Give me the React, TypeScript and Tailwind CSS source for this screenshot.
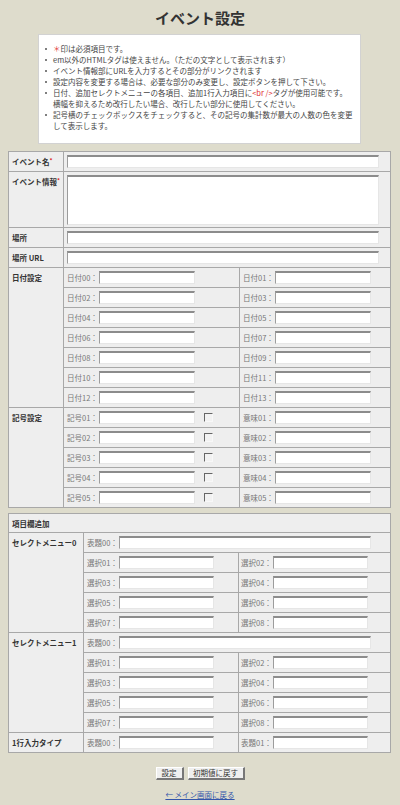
import React from 'react';

const inputCls =
  'h-[13px] bg-white border-t-2 border-l border-r border-b border-t-[#8c8c8c] border-l-[#9c9c9c] border-r-[#e6e6e6] border-b-[#e6e6e6] outline-none';

function Field({ className }: { className: string }) {
  return <input type="text" className={`${inputCls} ${className}`} />;
}

function Req() {
  return <span className="relative top-[-2px] text-[6px] text-[#dd2222]">*</span>;
}

function Tag({ children }: { children: React.ReactNode }) {
  return <span className="w-[32px] shrink-0 whitespace-nowrap text-[7.5px] leading-[11px] text-[#777]">{children}</span>;
}

function Check() {
  return (
    <span className="ml-[9px] h-[9px] w-[9px] border-t border-l border-r border-b border-t-[#666] border-l-[#666] border-r-[#f8f8f8] border-b-[#f8f8f8] bg-[#f2f2f2]" />
  );
}

function Group({ label, labelW, children }: { label: React.ReactNode; labelW: string; children: React.ReactNode }) {
  return (
    <div className="flex">
      <div
        className={`${labelW} shrink-0 whitespace-nowrap border-r border-b border-[#a8a8a8] pl-[3px] pt-[4px] text-[7.5px] font-bold leading-[11px] text-[#333]`}
      >
        {label}
      </div>
      <div className="min-w-0 flex-1">{children}</div>
    </div>
  );
}

interface PairProps {
  left: string;
  right: string;
  leftW: string;
  rightPad: string;
  fieldW: string;
  check?: boolean;
}

function Pair({ left, right, leftW, rightPad, fieldW, check }: PairProps) {
  return (
    <div className="flex h-[20px] border-b border-[#a8a8a8]">
      <div className={`${leftW} flex shrink-0 items-center border-r border-[#a8a8a8] pl-[3px]`}>
        <Tag>{left}：</Tag>
        <Field className={fieldW} />
        {check && <Check />}
      </div>
      <div className={`flex flex-1 items-center ${rightPad}`}>
        <Tag>{right}：</Tag>
        <Field className={fieldW} />
      </div>
    </div>
  );
}

const pad = (n: number) => String(n).padStart(2, '0');

function SelectMenu({ name }: { name: string }) {
  return (
    <Group label={name} labelW="w-[75px]">
      <div className="flex h-[20px] items-center border-b border-[#a8a8a8] pl-[3px]">
        <Tag>表題00：</Tag>
        <Field className="w-[252px]" />
      </div>
      {[1, 3, 5, 7].map((n) => (
        <Pair
          key={n}
          left={`選択${pad(n)}`}
          right={`選択${pad(n + 1)}`}
          leftW="w-[155px]"
          rightPad="pl-[2px]"
          fieldW="w-[95px]"
        />
      ))}
    </Group>
  );
}

export default function App() {
  return (
    <div className="min-h-[805px] bg-[#dedccc] pb-4 font-['Noto_Sans_CJK_JP','Noto_Sans',sans-serif] text-[#333]">
      <h1 className="pt-[8px] text-center text-[15px] font-bold leading-[20px] text-[#333]">イベント設定</h1>

      <div className="ml-[38px] mt-[6px] w-[323px] border border-[#d2d2d2] bg-white pb-[12px] pt-[8px] text-[7.5px] leading-[11px] text-[#444]">
        {[
          <>
            <span className="text-[#e03030]">＊</span>印は必須項目です。
          </>,
          <>em以外のHTMLタグは使えません。（ただの文字として表示されます）</>,
          <>イベント情報部にURLを入力するとその部分がリンクされます</>,
          <>設定内容を変更する場合は、必要な部分のみ変更し、設定ボタンを押して下さい。</>,
          <>
            日付、追加セレクトメニューの各項目、追加1行入力項目に<span className="text-[#e03030]">{'<br />'}</span>
            タグが使用可能です。
            <br />
            横幅を抑えるため改行したい場合、改行したい部分に使用してください。
          </>,
          <>
            記号横のチェックボックスをチェックすると、その記号の集計数が最大の人数の色を変更
            <br />
            して表示します。
          </>,
        ].map((item, i) => (
          <div key={i} className="flex">
            <span className="flex h-[11px] w-[14px] shrink-0 items-center justify-end pr-[6px]">
              <span className="h-[2px] w-[2px] rounded-full bg-[#555]" />
            </span>
            <span className="whitespace-nowrap">{item}</span>
          </div>
        ))}
      </div>

      <div className="ml-2 mt-[7px] w-[383px] border-t border-l border-r border-[#a8a8a8] bg-[#eeeeee]">
        <Group label={<>イベント名<Req /></>} labelW="w-[55px]">
          <div className="flex h-[20px] items-center border-b border-[#a8a8a8] pl-[3px]">
            <Field className="w-[312px]" />
          </div>
        </Group>
        <Group label={<>イベント情報<Req /></>} labelW="w-[55px]">
          <div className="flex h-[56px] items-center border-b border-[#a8a8a8] pl-[3px]">
            <textarea className={`${inputCls} h-[50px] w-[312px] resize-none`} />
          </div>
        </Group>
        <Group label="場所" labelW="w-[55px]">
          <div className="flex h-[20px] items-center border-b border-[#a8a8a8] pl-[3px]">
            <Field className="w-[312px]" />
          </div>
        </Group>
        <Group label="場所 URL" labelW="w-[55px]">
          <div className="flex h-[20px] items-center border-b border-[#a8a8a8] pl-[3px]">
            <Field className="w-[312px]" />
          </div>
        </Group>
        <Group label="日付設定" labelW="w-[55px]">
          {[0, 2, 4, 6, 8, 10, 12].map((n) => (
            <Pair
              key={n}
              left={`日付${pad(n)}`}
              right={`日付${pad(n + 1)}`}
              leftW="w-[176px]"
              rightPad="pl-[3px]"
              fieldW="w-[96px]"
            />
          ))}
        </Group>
        <Group label="記号設定" labelW="w-[55px]">
          {[1, 2, 3, 4, 5].map((n) => (
            <Pair
              key={n}
              left={`記号${pad(n)}`}
              right={`意味${pad(n)}`}
              leftW="w-[176px]"
              rightPad="pl-[3px]"
              fieldW="w-[96px]"
              check
            />
          ))}
        </Group>
      </div>

      <div className="ml-2 mt-[5px] w-[383px] border-t border-l border-r border-[#a8a8a8] bg-[#eeeeee]">
        <div className="h-[19px] border-b border-[#a8a8a8] pl-[3px] pt-[4px] text-[7.5px] font-bold leading-[11px] text-[#333]">
          項目欄追加
        </div>
        <SelectMenu name="セレクトメニュー0" />
        <SelectMenu name="セレクトメニュー1" />
        <Group label="1行入力タイプ" labelW="w-[75px]">
          <Pair left="表題00" right="表題01" leftW="w-[155px]" rightPad="pl-[2px]" fieldW="w-[95px]" />
        </Group>
      </div>

      <div className="mt-[14px] flex justify-center gap-[4px]">
        <button className="h-[13px] w-[28px] border-t border-l border-r-2 border-b-2 border-t-white border-l-white border-r-[#777] border-b-[#777] bg-[#efefef] text-[7.5px] leading-[10px] text-[#333]">
          設定
        </button>
        <button className="h-[13px] w-[57px] border-t border-l border-r-2 border-b-2 border-t-white border-l-white border-r-[#777] border-b-[#777] bg-[#efefef] text-[7.5px] leading-[10px] text-[#333]">
          初期値に戻す
        </button>
      </div>

      <div className="mt-[9px] text-center text-[7.5px] leading-[11px]">
        <a href="#" className="text-[#3355aa] underline">
          ← メイン画面に戻る
        </a>
      </div>
    </div>
  );
}
